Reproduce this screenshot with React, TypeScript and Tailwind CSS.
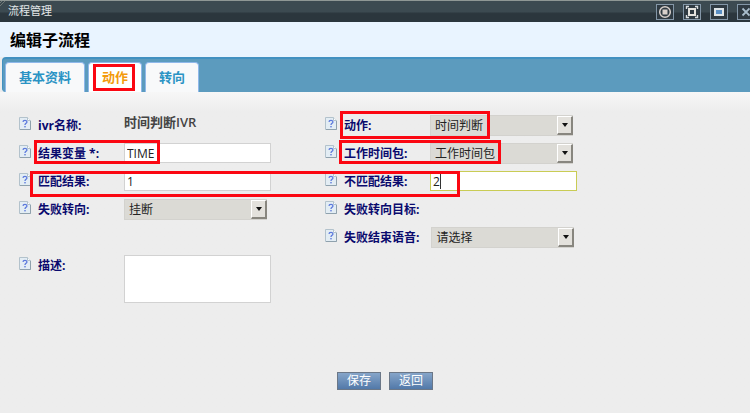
import React, { useState } from "react";

const actionOptions = ["时间判断", "播放语音", "转接"];
const packageOptions = ["工作时间包", "节假日时间包"];
const failOptions = ["挂断", "转队列"];
const voiceOptions = ["请选择", "默认语音"];

const tabs = ["基本资料", "动作", "转向"];

const inputClass =
  "block h-5 w-[147px] border border-[#d2d2d2] bg-white px-0.5 text-xs text-[#222] outline-none";

const HelpIcon = () => (
  <svg width="12" height="13" viewBox="0 0 12 13" className="shrink-0">
    <path d="M0.5 0.5H8.5L11.5 3.5V12.5H0.5Z" fill="#e3edf4" stroke="#b3c2cc" />
    <path d="M8.5 0.5V3.5H11.5" fill="#fff" stroke="#b3c2cc" />
    <path d="M11.5 4V12.5H1" fill="none" stroke="#8fa1ad" />
    <path
      d="M4 4.9C4.1 2.9 7.9 2.8 7.9 4.9C7.9 6.3 6 6.3 6 8"
      fill="none"
      stroke="#5b78dc"
      strokeWidth="1.3"
    />
    <rect x="5.3" y="9" width="1.4" height="1.4" fill="#5b78dc" />
  </svg>
);

// red frame around an important area
const Mark = ({ className }: { className: string }) => (
  <span
    className={`pointer-events-none absolute z-10 border-3 border-[#fb0712] ${className}`}
  />
);

type FieldProps = {
  id?: string;
  label: string;
  children?: React.ReactNode;
};

const Field = ({ id, label, children }: FieldProps) => (
  <div className="relative flex items-start">
    <div className="flex h-7 min-w-[105px] items-center">
      <span className="pb-1">
        <HelpIcon />
      </span>
      <label
        htmlFor={id}
        className="ml-[7px] pt-0.5 pr-3 text-xs font-bold whitespace-nowrap text-[#0a0a6e]"
      >
        {label}
      </label>
    </div>
    {children}
  </div>
);

type SelectProps = {
  id: string;
  options: string[];
};

const Select = ({ id, options }: SelectProps) => {
  const [value, setValue] = useState(options[0]);

  return (
    <div className="relative mt-1 h-[21px] w-[143px]">
      <select
        id={id}
        value={value}
        onChange={(e) => setValue(e.target.value)}
        className="block h-full w-full appearance-none border border-[#d3d2ce] bg-[#dbdad5] pl-1 text-xs text-[#222] outline-none"
      >
        {options.map((o) => (
          <option key={o}>{o}</option>
        ))}
      </select>
      <span className="pointer-events-none absolute top-px right-0 bottom-px flex w-4 items-center justify-center border-t border-r-2 border-b-2 border-l border-t-white border-r-[#88867f] border-b-[#88867f] border-l-white bg-[#e3e1dc]">
        <svg width="6" height="4" viewBox="0 0 6 4">
          <path d="M0 0H6L3 4Z" fill="#111" />
        </svg>
      </span>
    </div>
  );
};

const WindowButton = ({
  label,
  children,
}: {
  label: string;
  children: React.ReactNode;
}) => (
  <button
    aria-label={label}
    className="flex h-4 w-[18px] shrink-0 items-center justify-center border border-[#8497a8] bg-[#2f3a42]"
  >
    <svg width="14" height="14" viewBox="0 0 14 14" fill="none" className="shrink-0">
      {children}
    </svg>
  </button>
);

const App = () => {
  const [activeTab, setActiveTab] = useState("动作");
  const [matchVar, setMatchVar] = useState("TIME");
  const [match, setMatch] = useState("1");
  const [noMatch, setNoMatch] = useState("2");

  return (
    <div className="flex min-h-screen flex-col overflow-hidden bg-[#ededed] font-['Open_Sans','Noto_Sans_CJK_SC',sans-serif]">
      {/* WINDOW BAR */}
      <div className="relative flex h-[22px] items-center border-t border-[#8f9795] bg-linear-to-b from-[#3c4a51] from-50% to-[#2b363d] to-60% pl-2">
        <svg width="6" height="6" viewBox="0 0 6 6" className="absolute top-0 left-0">
          <path d="M0 5L5 0M0 2L2 0" stroke="#6f7876" />
        </svg>
        <span className="text-[11px] text-[#e4e8ea]">流程管理</span>
        <div className="-mr-[5px] ml-auto flex gap-[9px]">
          <WindowButton label="刷新">
            <circle cx="7" cy="7" r="5.3" stroke="#d8d0cb" strokeWidth="1.5" />
            <rect x="4.5" y="4.5" width="5" height="5" fill="#d8d0cb" />
          </WindowButton>
          <WindowButton label="全屏">
            <path
              d="M1.5 4V1.5H4M10 1.5H12.5V4M12.5 10V12.5H10M4 12.5H1.5V10"
              stroke="#d8dde0"
              strokeWidth="1.4"
            />
            <rect x="4" y="4" width="6" height="6" stroke="#e5e3de" strokeWidth="2" />
          </WindowButton>
          <WindowButton label="还原">
            <rect x="3" y="4" width="8" height="6" fill="#5a8fc4" stroke="#dfe5e8" strokeWidth="2" />
          </WindowButton>
          <WindowButton label="关闭">
            <path d="M3.5 3.5L10.5 10.5M10.5 3.5L3.5 10.5" stroke="#a9bdcc" strokeWidth="1.8" />
          </WindowButton>
        </div>
      </div>

      {/* HEADING */}
      <div className="flex h-[35px] items-center bg-[#e9f4ff] pl-2.5">
        <h1 className="text-base font-bold text-black">编辑子流程</h1>
      </div>

      {/* TABS */}
      <div className="ml-0.5 flex h-[35px] items-end gap-[3px] rounded-l border-t-2 border-l border-[#4291c1] bg-[#5c9bbe] pl-0.5">
        {tabs.map((tab) => (
          <button
            key={tab}
            onClick={() => setActiveTab(tab)}
            className={`relative h-[30px] rounded-t border border-b-0 border-[#8fb8ea] px-[13px] text-[13px] font-bold ${
              activeTab === tab
                ? "bg-white text-[#f39a0c]"
                : "bg-[#f8f9fa] text-[#2a93c4]"
            }`}
          >
            {tab}
            {tab === "动作" && <Mark className="top-px right-1.5 bottom-px left-1" />}
          </button>
        ))}
      </div>

      {/* FORM */}
      <form
        onSubmit={(e) => e.preventDefault()}
        className="flex-1 bg-linear-to-b from-[#f7f7f7] to-[#ededed] to-[20px] pt-[19px]"
      >
        <div className="grid max-w-[631px] grid-cols-2 pl-[19px]">
          <Field label="ivr名称:">
            <span className="mt-0.5 text-[13px] font-semibold text-[#444]">
              时间判断IVR
            </span>
          </Field>
          <Field id="action" label="动作:">
            <Select id="action" options={actionOptions} />
            <Mark className="top-0 left-[15px] h-7 w-[150px]" />
          </Field>

          <Field id="matchVar" label="结果变量 *:">
            <div className="mt-1">
              <input
                id="matchVar"
                type="text"
                value={matchVar}
                onChange={(e) => setMatchVar(e.target.value)}
                className={inputClass}
              />
            </div>
            <Mark className="top-px left-[15px] h-6 w-[126px]" />
          </Field>
          <Field id="package" label="工作时间包:">
            <Select id="package" options={packageOptions} />
            <Mark className="top-px left-[14px] h-6 w-[162px]" />
          </Field>

          <Field id="match" label="匹配结果:">
            <div className="mt-1">
              <input
                id="match"
                type="text"
                value={match}
                onChange={(e) => setMatch(e.target.value)}
                className={inputClass}
              />
            </div>
            <Mark className="top-1 left-[11px] h-[26px] w-[430px]" />
          </Field>
          <Field id="noMatch" label="不匹配结果:">
            <div className="relative mt-1">
              <input
                id="noMatch"
                type="text"
                value={noMatch}
                onChange={(e) => setNoMatch(e.target.value)}
                className="block h-5 w-[147px] border border-[#c9cc55] bg-white px-0.5 text-xs text-[#222] outline-none"
              />
              {/* caret */}
              <span className="pointer-events-none absolute top-0.5 left-2.5 h-4 w-px bg-[#333]" />
            </div>
          </Field>

          <Field id="fail" label="失败转向:">
            <Select id="fail" options={failOptions} />
          </Field>
          <Field label="失败转向目标:" />

          <div />
          <Field id="voice" label="失败结束语音:">
            <Select id="voice" options={voiceOptions} />
          </Field>

          <Field id="desc" label="描述:">
            <textarea
              id="desc"
              className="mt-1 h-12 w-[147px] resize-none border border-[#d2d2d2] bg-white p-0.5 text-xs outline-none"
            />
          </Field>
        </div>

        {/* BUTTONS */}
        <div className="flex justify-center gap-2 pt-[69px] pb-5 pl-5">
          <button
            type="submit"
            className="flex h-[18px] w-11 items-center justify-center border border-[#6b7787] bg-linear-to-b from-[#86a5c9] to-[#5279a9] text-xs text-white"
          >
            保存
          </button>
          <button
            type="button"
            className="flex h-[18px] w-11 items-center justify-center border border-[#6b7787] bg-linear-to-b from-[#86a5c9] to-[#5279a9] text-xs text-white"
          >
            返回
          </button>
        </div>
      </form>
    </div>
  );
};

export default App;
